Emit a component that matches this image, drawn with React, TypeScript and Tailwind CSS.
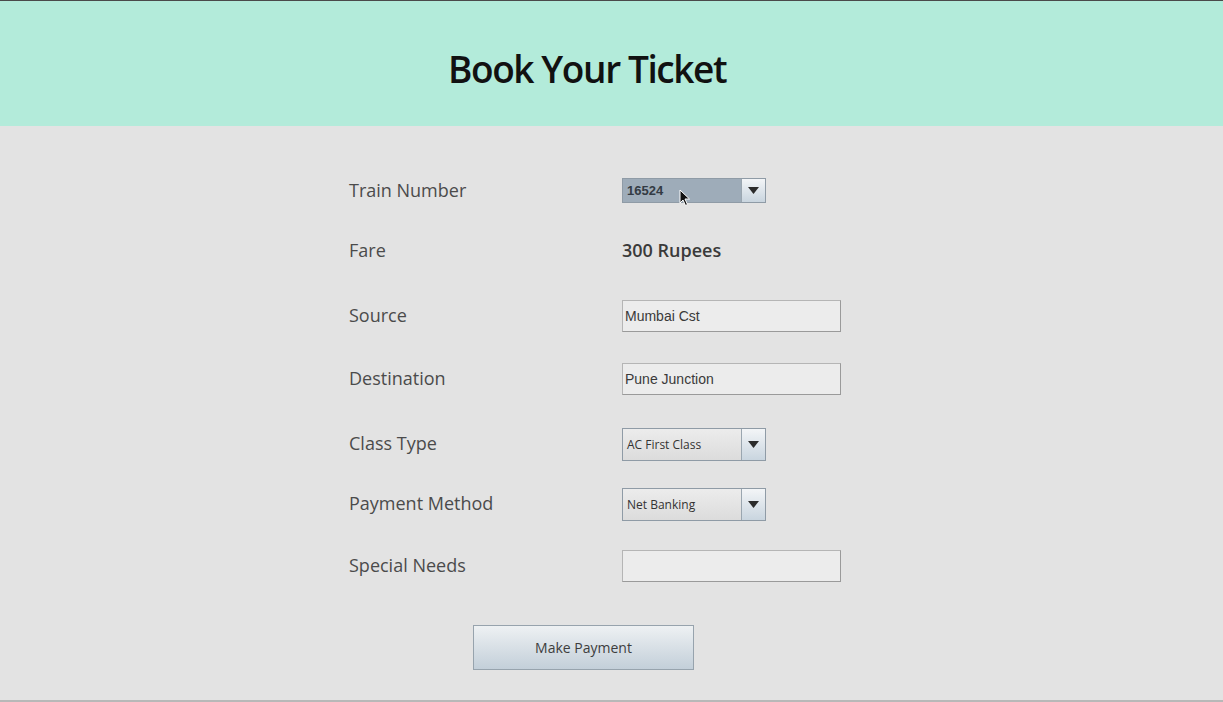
import React from "react";

const labelCls =
  "w-[273px] shrink-0 text-[18px] text-[#4b4b4b] [font-family:'Open_Sans','Noto_Sans',sans-serif]";

function Arrow() {
  return (
    <div className="w-[24px] h-full flex items-center justify-center border-l border-[#9aa6b0] bg-gradient-to-b from-[#f3f5f7] to-[#c9d5df]">
      <svg width="11" height="7" viewBox="0 0 11 7">
        <path d="M0 0 H11 L5.5 7 Z" fill="#2b2b2b" />
      </svg>
    </div>
  );
}

function Combo({
  text,
  selected,
  height,
}: {
  text: string;
  selected?: boolean;
  height: number;
}) {
  return (
    <div
      className={`w-[144px] flex items-stretch border border-[#8f9ba6] ${
        selected ? "bg-[#9eacb9]" : "bg-gradient-to-b from-[#ececec] to-[#dcdcdc]"
      }`}
      style={{ height }}
    >
      <div className="flex-1 flex items-center pl-[4px]">
        {selected ? (
          <span className="text-[13px] font-bold text-[#333b44] [font-family:'Liberation_Sans',Arial,sans-serif]">
            {text}
          </span>
        ) : (
          <span className="text-[12px] text-[#333] [font-family:'Open_Sans','Noto_Sans',sans-serif]">
            {text}
          </span>
        )}
      </div>
      <Arrow />
    </div>
  );
}

function Field({ text }: { text?: string }) {
  return (
    <div className="w-[219px] h-[32px] mt-[2px] flex items-center pl-[2px] bg-[#ececec] border border-t-[#b5b5b5] border-l-[#b5b5b5] border-r-[#9a9a9a] border-b-[#9a9a9a]">
      <span className="text-[14px] text-[#3a3a3a] [font-family:'Liberation_Sans',Arial,sans-serif]">
        {text}
      </span>
    </div>
  );
}

export default function App() {
  return (
    <div className="w-[1223px] h-[702px] overflow-hidden bg-[#e3e3e3] flex flex-col border-t border-[#4a4a4a] border-b-2 border-b-[#b8b8b8]">
      <div className="h-[125px] shrink-0 bg-[#b3ebda] flex items-center pl-[448px]">
        <h1 className="text-[37px] font-semibold tracking-[-1.4px] text-[#111] [font-family:'Open_Sans','Noto_Sans',sans-serif] pt-[10px]">
          Book Your Ticket
        </h1>
      </div>

      <div className="pl-[349px] flex flex-col pt-[50px]">
        <div className="flex items-center h-[28px] relative">
          <div className={labelCls}>Train Number</div>
          <div className="mt-[1px]">
            <Combo text="16524" selected height={25} />
          </div>
          <svg
            className="absolute left-[330px] top-[13px]"
            width="12"
            height="18"
            viewBox="0 0 12 18"
          >
            <path
              d="M1 1 L1 14 L4 11 L6.5 16.5 L8.5 15.5 L6 10 L10.5 10 Z"
              fill="#111"
              stroke="#fff"
              strokeWidth="1"
            />
          </svg>
        </div>

        <div className="flex items-center h-[32px] mt-[30px]">
          <div className={labelCls}>Fare</div>
          <div className="text-[18px] font-semibold text-[#3a3a3a] [font-family:'Open_Sans','Noto_Sans',sans-serif]">
            300 Rupees
          </div>
        </div>

        <div className="flex items-center h-[32px] mt-[33px]">
          <div className={labelCls}>Source</div>
          <Field text="Mumbai Cst" />
        </div>

        <div className="flex items-center h-[32px] mt-[31px]">
          <div className={labelCls}>Destination</div>
          <Field text="Pune Junction" />
        </div>

        <div className="flex items-center h-[33px] mt-[33px]">
          <div className={labelCls}>Class Type</div>
          <div className="mt-[2px]">
            <Combo text="AC First Class" height={33} />
          </div>
        </div>

        <div className="flex items-center h-[33px] mt-[27px]">
          <div className={labelCls}>Payment Method</div>
          <div className="mt-[2px]">
            <Combo text="Net Banking" height={33} />
          </div>
        </div>

        <div className="flex items-center h-[32px] mt-[29px]">
          <div className={labelCls}>Special Needs</div>
          <Field />
        </div>

        <div className="mt-[44px] pl-[124px]">
          <button className="w-[221px] h-[45px] border border-[#97a3ad] bg-gradient-to-b from-[#eef1f3] to-[#c3cfd9] text-[14px] text-[#3d3d3d] [font-family:'Open_Sans','Noto_Sans',sans-serif]">
            Make Payment
          </button>
        </div>
      </div>
    </div>
  );
}
